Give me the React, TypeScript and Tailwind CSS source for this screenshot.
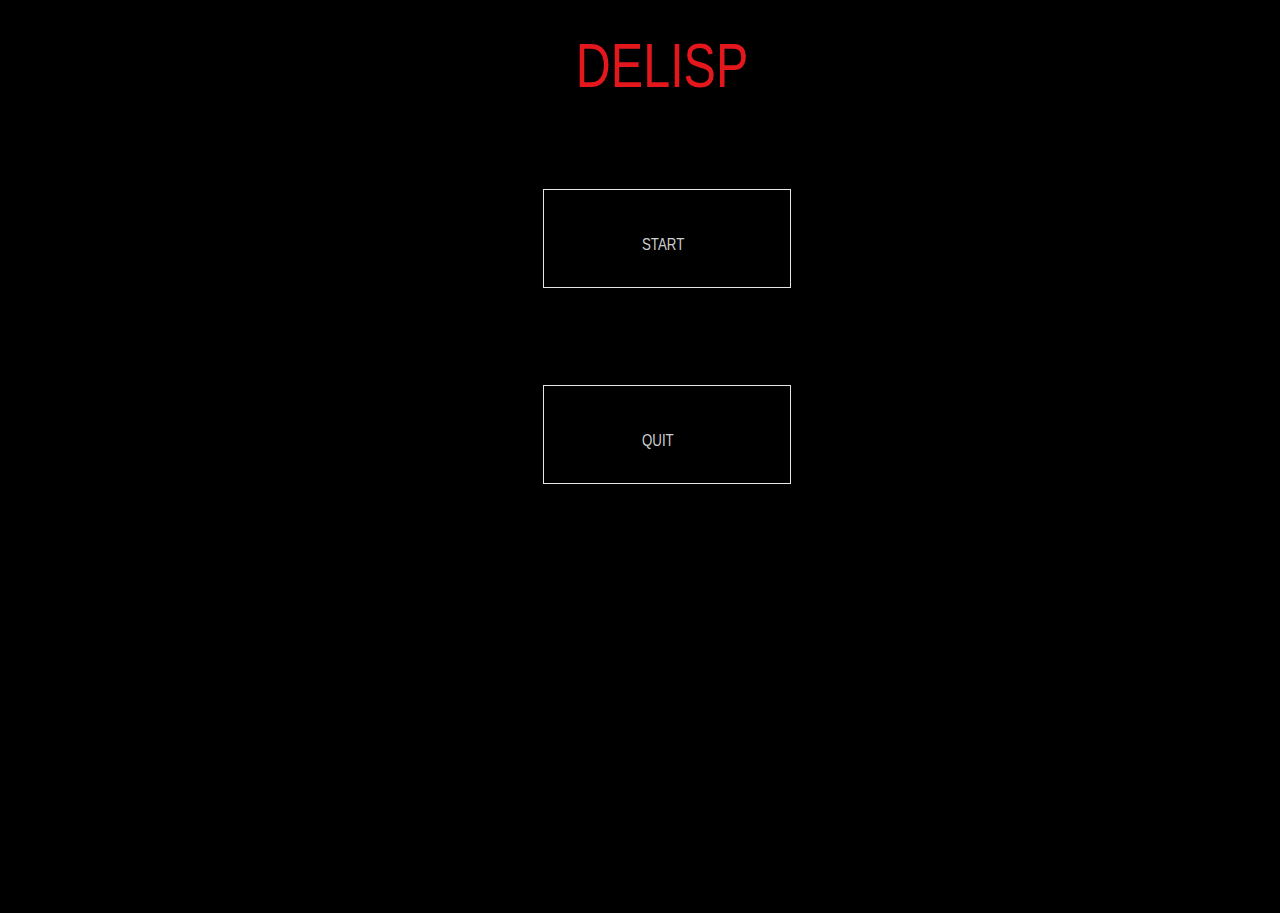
export default function App() {
  return (
    <div className="min-h-[913px] w-full bg-black" style={{ fontFamily: '"Liberation Sans", Arial, sans-serif' }}>
      <div className="ml-[543px] flex w-[248px] flex-col pt-[34px]">
        {/* Title */}
        <h1 className="ml-[-10px] text-center text-[63px] leading-none text-[#e3171c]">
          <span className="inline-block scale-x-[0.77]">DELISP</span>
        </h1>

        {/* Menu */}
        <div className="mt-[92px] flex flex-col gap-[97px]">
          <button className="h-[99px] w-[248px] border border-[#e6e6e6] pl-[98px] pt-[12px] text-left text-[17px] text-[#cfcfcf]">
            <span className="inline-block origin-left scale-x-[0.78]">START</span>
          </button>
          <button className="h-[99px] w-[248px] border border-[#e6e6e6] pl-[98px] pt-[12px] text-left text-[17px] text-[#cfcfcf]">
            <span className="inline-block origin-left scale-x-[0.78]">QUIT</span>
          </button>
        </div>
      </div>
    </div>
  );
}
